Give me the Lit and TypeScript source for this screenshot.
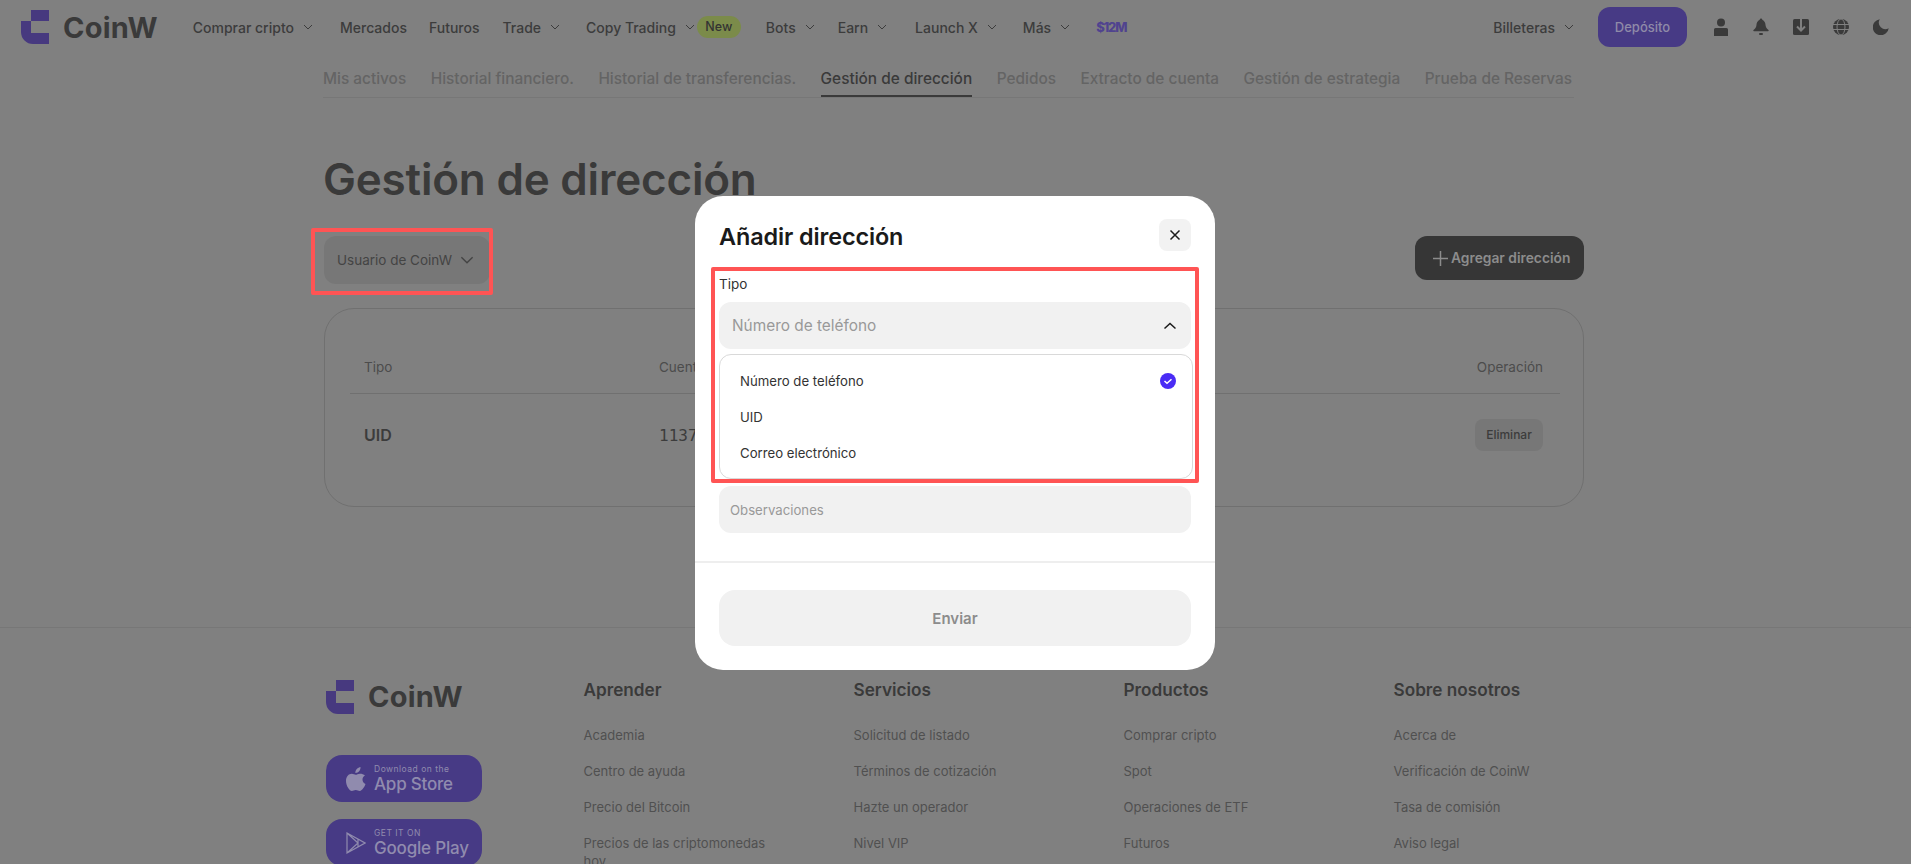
import {LitElement, html, css, svg} from 'lit';
import {customElement} from 'lit/decorators.js';

const chevron = (size = 10) => html`<svg class="chev" width=${size} height=${size} viewBox="0 0 10 10"><path d="M1 3l4 4 4-4" fill="none" stroke="currentColor" stroke-width="1"/></svg>`;

const logoMark = svg`<path d="M10 0H28V11H10Z"/><path d="M0 11H10V23H28V34H12A12 12 0 0 1 0 22Z"/>`;

const navItems = [
  {label: 'Comprar cripto', arrow: true, gap: 27},
  {label: 'Mercados', arrow: false, gap: 22},
  {label: 'Futuros', arrow: false, gap: 23},
  {label: 'Trade', arrow: true, gap: 26},
  {label: 'Copy Trading', arrow: true, gap: 2, badge: true},
  {label: 'Bots', arrow: true, gap: 23},
  {label: 'Earn', arrow: true, gap: 28},
  {label: 'Launch X', arrow: true, gap: 26},
  {label: 'Más', arrow: true, gap: 26},
];

const tabs = ['Mis activos', 'Historial financiero.', 'Historial de transferencias.', 'Gestión de dirección', 'Pedidos', 'Extracto de cuenta', 'Gestión de estrategia', 'Prueba de Reservas'];

const footerCols = [
  {title: 'Aprender', links: ['Academia', 'Centro de ayuda', 'Precio del Bitcoin', 'Precios de las criptomonedas hoy']},
  {title: 'Servicios', links: ['Solicitud de listado', 'Términos de cotización', 'Hazte un operador', 'Nivel VIP']},
  {title: 'Productos', links: ['Comprar cripto', 'Spot', 'Operaciones de ETF', 'Futuros']},
  {title: 'Sobre nosotros', links: ['Acerca de', 'Verificación de CoinW', 'Tasa de comisión', 'Aviso legal']},
];

@customElement('app-root')
export class AppRoot extends LitElement {
  static styles = css`
    :host {
      display: block;
      position: relative;
      height: 864px;
      overflow: hidden;
      background: #808080;
      font-family: Inter, "Noto Sans", sans-serif;
      color: #3c3c3c;
    }

    /* top bar */
    .topbar {
      display: flex;
      align-items: center;
      height: 54px;
      padding: 0 22px 0 21px;
    }
    .logo { display: flex; align-items: center; gap: 14px; margin-right: 35px; }
    .logo svg { fill: #47397f; display: block; }
    .logo b { font-size: 29px; font-weight: 700; color: #3a3a3a; letter-spacing: .2px; }
    .nav-item { display: flex; align-items: center; gap: 9px; font-size: 14px; font-weight: 500; white-space: nowrap; }
    .chev { flex: none; }
    .badge {
      background: #7b8b4a;
      color: #333;
      border-radius: 12px;
      font-size: 12.5px;
      font-weight: 500;
      height: 22px;
      width: 44px;
      line-height: 22px;
      text-align: center;
    }
    .promo {
      font-size: 13px;
      font-weight: 800;
      letter-spacing: -1.2px;
      color: #50438f;
    }
    .right { margin-left: auto; display: flex; align-items: center; }
    .deposit {
      margin: 0 26px 0 24px;
      width: 89px;
      height: 40px;
      line-height: 40px;
      text-align: center;
      border-radius: 12px;
      background: #473a85;
      color: #8f8aa8;
      font-size: 13px;
      font-weight: 500;
    }
    .icons { display: flex; align-items: center; gap: 24px; }
    .icons svg { display: block; fill: #3a3a3a; }

    /* sub navigation */
    .tabs {
      display: flex;
      gap: 24.5px;
      margin: 0 337px 0 323px;
      height: 43px;
      border-bottom: 1px solid #777;
      font-size: 15.4px;
      font-weight: 500;
      color: #646464;
      white-space: nowrap;
    }
    .tab { height: 43px; box-sizing: border-box; padding-top: 15px; line-height: 20px; }
    .tab.on { color: #3a3a3a; border-bottom: 2px solid #3a3a3a; }

    /* main */
    .main { margin: 0 327px 0 324px; }
    h1 {
      margin: 0 0 0 -1px;
      padding-top: 53px;
      font-size: 44px;
      line-height: 56px;
      font-weight: 600;
      color: #3a3a3a;
      letter-spacing: -.2px;
    }
    .actions { display: flex; justify-content: space-between; align-items: flex-start; margin-top: 29px; }
    .filter {
      display: flex;
      align-items: center;
      gap: 8px;
      height: 48px;
      width: 166px;
      box-sizing: border-box;
      padding: 0 16px 0 13px;
      border-radius: 12px;
      background: #777;
      font-size: 13.5px;
      color: #444;
      white-space: nowrap;
    }
    .add {
      display: flex;
      align-items: center;
      gap: 3px;
      width: 169px;
      height: 44px;
      box-sizing: border-box;
      padding-left: 18px;
      border-radius: 12px;
      background: #363636;
      color: #8c8c8c;
      font-size: 13.8px;
      font-weight: 600;
      white-space: nowrap;
    }
    .card {
      margin-top: 24px;
      height: 199px;
      box-sizing: border-box;
      padding: 0 23px 0 25px;
      border: 1px solid #707070;
      border-radius: 30px;
    }
    .row { display: grid; grid-template-columns: 295px 1fr auto; align-items: center; padding: 0 17px 0 14px; }
    .row.head { height: 85px; padding-top: 32px; box-sizing: border-box; line-height: 53px; border-bottom: 1px solid #707070; font-size: 13.5px; color: #4c4c4c; }
    .row.body { height: 82px; font-size: 16px; font-weight: 600; color: #3c3c3c; }
    .acct { font-family: "DejaVu Sans Mono", monospace; font-weight: 500; font-size: 16px; }
    .del {
      width: 68px;
      height: 32px;
      line-height: 32px;
      text-align: center;
      border-radius: 8px;
      background: #777;
      font-size: 12px;
      font-weight: 500;
    }

    /* footer */
    footer {
      margin-top: 120px;
      border-top: 1px solid #777;
      padding: 51px 0 0 326px;
      display: flex;
    }
    .brand { width: 257.5px; }
    .brand .logo { margin: 0 0 41px; }
    .store {
      display: flex;
      align-items: center;
      gap: 8px;
      width: 156px;
      height: 47px;
      box-sizing: border-box;
      padding-left: 20px;
      margin-bottom: 17px;
      border-radius: 16px;
      background: #473a85;
      color: #908bae;
    }
    .store svg { fill: #908bae; display: block; flex: none; }
    .store svg.play { fill: none; stroke: #908bae; stroke-width: 1.2; }
    .store small { display: block; font-size: 8.5px; line-height: 10px; letter-spacing: .5px; }
    .store span { display: block; font-size: 17px; line-height: 20px; font-weight: 500; white-space: nowrap; letter-spacing: -.2px; }
    .col { width: 270px; flex: none; }
    .col h4 { margin: 0 0 25px; font-size: 17.2px; line-height: 22px; font-weight: 600; color: #3a3a3a; }
    .col a { display: block; width: 190px; margin-bottom: 18px; font-size: 13px; line-height: 18px; color: #505050; }

    /* modal layer */
    .layer {
      position: absolute;
      inset: 0;
      padding: 2px 1px 0 0;
      display: flex;
      align-items: center;
      justify-content: center;
    }
    .modal {
      width: 520px;
      height: 474px;
      flex: none;
      box-sizing: border-box;
      padding: 23px 24px 24px;
      background: #fff;
      border-radius: 28px;
      color: #1a1a1a;
    }
    .modal-head { display: flex; justify-content: space-between; align-items: center; height: 32px; }
    .modal-head h2 { margin: 0; padding-top: 2px; font-size: 23.4px; font-weight: 600; letter-spacing: -.1px; }
    .close {
      width: 32px;
      height: 32px;
      border-radius: 8px;
      background: #f2f2f2;
      display: flex;
      align-items: center;
      justify-content: center;
    }
    .label { margin-top: 23px; font-size: 13.5px; line-height: 20px; color: #333; }
    .select {
      display: flex;
      align-items: center;
      justify-content: space-between;
      height: 47px;
      margin-top: 8px;
      padding: 0 14px 0 13px;
      border-radius: 12px;
      background: #f1f1f1;
      color: #999;
      font-size: 15.4px;
    }
    .menu {
      margin-top: 5px;
      width: 474px;
      height: 125px;
      box-sizing: border-box;
      padding: 8px 16px 0 20px;
      border: 1px solid #d9d9d9;
      border-radius: 12px;
    }
    .opt { display: flex; align-items: center; justify-content: space-between; height: 36px; font-size: 13.2px; color: #333; }
    .obs {
      height: 47px;
      line-height: 49px;
      margin-top: 7px;
      padding-left: 11px;
      border-radius: 12px;
      background: #f1f1f1;
      color: #999;
      font-size: 13.2px;
    }
    .rule { height: 2px; background: #eee; margin: 28px -24px 27px; }
    .send {
      height: 56px;
      line-height: 58px;
      text-align: center;
      border-radius: 16px;
      background: #f1f1f1;
      color: #8c8c8c;
      font-size: 15px;
      font-weight: 600;
    }

    /* red annotation boxes drawn over the screenshot */
    .mark { position: absolute; box-sizing: border-box; border: 4px solid #ff5454; border-radius: 2px; }
    .mark.a { left: 311px; top: 228px; width: 182px; height: 67px; }
    .mark.b { left: 711px; top: 267px; width: 488px; height: 216px; }
  `

  render() {
    return html`
      <div class="topbar">
        <div class="logo">
          <svg width="28" height="34" viewBox="0 0 28 34">${logoMark}</svg>
          <b>CoinW</b>
        </div>
        ${navItems.map(n => html`
          <div class="nav-item" style="margin-right:${n.gap}px">${n.label}${n.arrow ? chevron() : ''}</div>
          ${n.badge ? html`<div class="badge" style="margin-right:25px">New</div>` : ''}
        `)}
        <div class="promo">$12M</div>
        <div class="right">
          <div class="nav-item">Billeteras${chevron()}</div>
          <div class="deposit">Depósito</div>
          <div class="icons">
            <svg width="16" height="18" viewBox="0 0 16 18"><circle cx="8" cy="4.5" r="4"/><path d="M1 11.5a1.5 1.5 0 0 1 1.5-1.5h11a1.5 1.5 0 0 1 1.5 1.5V18H1Z"/></svg>
            <svg width="16" height="18" viewBox="0 0 16 18"><path d="M8 0.5c.8 0 1.2.6 1.3 1.3C11.5 2.6 12.4 5 12.6 7.5c.2 2 1.2 3 2.9 4.6.4.4.2 1.1-.5 1.1H1c-.7 0-.9-.7-.5-1.1 1.7-1.6 2.7-2.6 2.9-4.6.2-2.5 1.100-4.900 3.300-5.700C6.800 1.100 7.200.5 8 .5Z"/><rect x="6" y="15" width="4" height="2" rx="1"/></svg>
            <svg width="16" height="16" viewBox="0 0 16 16"><rect width="16" height="16" rx="1.5"/><path d="M8 0V11M4 7.500L8 11.500 12 7.500" fill="none" stroke="#808080" stroke-width="2"/></svg>
            <svg width="16" height="16" viewBox="0 0 16 16"><circle cx="8" cy="8" r="8"/><ellipse cx="8" cy="8" rx="4" ry="8" fill="none" stroke="#808080"/><path d="M0 5.500H16M0 10.500H16" stroke="#808080"/></svg>
            <svg width="16" height="16" viewBox="0 0 16 16"><path d="M6.800 0.300A6.500 6.500 0 0 0 15.700 9.200 8 8 0 1 1 6.800.3Z"/></svg>
          </div>
        </div>
      </div>

      <div class="tabs">
        ${tabs.map(t => html`<div class="tab ${t === 'Gestión de dirección' ? 'on' : ''}">${t}</div>`)}
      </div>

      <div class="main">
        <h1>Gestión de dirección</h1>
        <div class="actions">
          <div class="filter">Usuario de CoinW ${chevron(14)}</div>
          <div class="add">
            <svg width="15" height="15" viewBox="0 0 16 16"><path d="M8 0V16M0 8H16" stroke="#8c8c8c" stroke-width="1.600"/></svg>
            Agregar dirección
          </div>
        </div>
        <div class="card">
          <div class="row head"><span>Tipo</span><span>Cuenta</span><span>Operación</span></div>
          <div class="row body"><span>UID</span><span class="acct">11378</span><div class="del">Eliminar</div></div>
        </div>
      </div>

      <footer>
        <div class="brand">
          <div class="logo">
            <svg width="28" height="34" viewBox="0 0 28 34">${logoMark}</svg>
            <b>CoinW</b>
          </div>
          <div class="store">
            <svg width="20" height="24" viewBox="0 0 20 24"><path d="M14.500 0c.2 1.700-.5 3.200-1.400 4.300-.9 1-2.300 1.800-3.700 1.700-.2-1.500.6-3.100 1.400-4C11.800 1 13.300.2 14.500 0ZM19 8.300c-1.700 1.100-2.500 2.500-2.500 4.200 0 2 1.200 3.600 3 4.400-.5 1.500-1.200 2.900-2.100 4.200-1.300 1.800-2.300 2.900-3.700 2.900-1.500 0-2-.9-3.900-.9s-2.500.9-3.900.9c-1.400 0-2.400-1.200-3.700-3C.6 18.800 0 15.900 0 13.800c0-4.200 2.700-7 5.800-7 1.600 0 2.900 1 3.900 1s2.400-1.100 4.200-1.100c2 0 3.800 .7 5.100 1.600Z"/></svg>
            <div><small>Download on the</small><span>App Store</span></div>
          </div>
          <div class="store">
            <svg class="play" width="20" height="22" viewBox="0 0 20 22"><path d="M1 1L19 11 1 21ZM1 1L12 11 1 21M12 7.500V14.500"/></svg>
            <div><small>GET IT ON</small><span>Google Play</span></div>
          </div>
        </div>
        ${footerCols.map(c => html`
          <div class="col">
            <h4>${c.title}</h4>
            ${c.links.map(l => html`<a>${l}</a>`)}
          </div>
        `)}
      </footer>

      <div class="layer">
        <div class="modal">
          <div class="modal-head">
            <h2>Añadir dirección</h2>
            <div class="close"><svg width="12" height="12" viewBox="0 0 12 12"><path d="M1.500 1.500l9 9M10.500 1.500l-9 9" stroke="#1a1a1a" stroke-width="1.500"/></svg></div>
          </div>
          <div class="label">Tipo</div>
          <div class="select">
            Número de teléfono
            <svg width="14" height="10" viewBox="0 0 14 10"><path d="M1.500 7.500L7 2.500l5.500 5" fill="none" stroke="#1a1a1a" stroke-width="1.500"/></svg>
          </div>
          <div class="menu">
            <div class="opt">Número de teléfono
              <svg width="16" height="16" viewBox="0 0 16 16"><circle cx="8" cy="8" r="8" fill="#4a2cf5"/><path d="M4.500 8l2.500 2.300 4.500-4" fill="none" stroke="#fff" stroke-width="1.500"/></svg>
            </div>
            <div class="opt">UID</div>
            <div class="opt">Correo electrónico</div>
          </div>
          <div class="obs">Observaciones</div>
          <div class="rule"></div>
          <div class="send">Enviar</div>
        </div>
      </div>

      <div class="mark a"></div>
      <div class="mark b"></div>
    `
  }
}
